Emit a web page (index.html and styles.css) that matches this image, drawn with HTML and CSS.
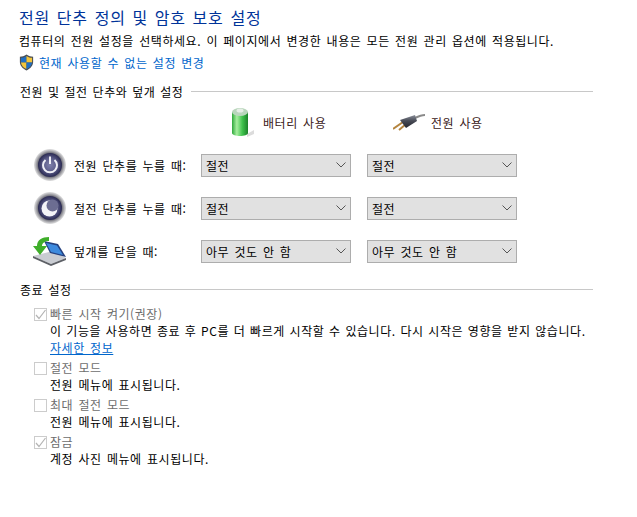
FILE: index.html
```html
<!DOCTYPE html>
<html lang="ko">
<head>
    <meta charset="UTF-8">
    <title>전원 단추 정의 및 암호 보호 설정</title>
    <link rel="stylesheet" href="styles.css">
</head>
<body>
    <svg class="svg-defs" width="0" height="0">
        <defs>
            <radialGradient id="ring">
                <stop offset=".75" stop-color="#6f6f78"/>
                <stop offset=".9" stop-color="#b8b8bc"/>
                <stop offset="1" stop-color="#e2e2e2"/>
            </radialGradient>
            <radialGradient id="disc">
                <stop offset="0" stop-color="#8081ab"/>
                <stop offset=".6" stop-color="#5a5b88"/>
                <stop offset="1" stop-color="#2a2a52"/>
            </radialGradient>
            <linearGradient id="batt" x1="0" x2="1" y1="0" y2="0">
                <stop offset="0" stop-color="#2fa83c"/>
                <stop offset=".3" stop-color="#a6ee9e"/>
                <stop offset=".65" stop-color="#3fc24c"/>
                <stop offset="1" stop-color="#1b8229"/>
            </linearGradient>
            <linearGradient id="plugbody" x1="0" x2="0" y1="0" y2="1">
                <stop offset="0" stop-color="#8b8f9a"/>
                <stop offset=".45" stop-color="#484b56"/>
                <stop offset="1" stop-color="#24262e"/>
            </linearGradient>
        </defs>
    </svg>

    <h1 class="page-title">전원 단추 정의 및 암호 보호 설정</h1>
    <p class="intro">컴퓨터의 전원 설정을 선택하세요. 이 페이지에서 변경한 내용은 모든 전원 관리 옵션에 적용됩니다.</p>
    <div class="admin-link">
        <svg class="shield" width="15" height="17" viewBox="0 0 17 19">
            <path d="M8.5 .5 C6 2.5 3.500 3 1 3 V9 C1 13 4 16.500 8.500 18.500 C13 16.500 16 13 16 9 V3 C13.500 3 11 2.500 8.500 .5Z" fill="#4a4f55"/>
            <path d="M8.500 2 C6.500 3.500 4.500 4 2.200 4.200 V9.500 H8.500Z" fill="#1f6fc4"/>
            <path d="M8.500 2 C10.500 3.500 12.500 4 14.800 4.200 V9.500 H8.500Z" fill="#f3c53a"/>
            <path d="M2.200 9.500 H8.500 V17 C5 15.300 2.600 13 2.200 9.500Z" fill="#f3c53a"/>
            <path d="M14.800 9.500 H8.500 V17 C12 15.300 14.400 13 14.800 9.500Z" fill="#1f6fc4"/>
        </svg>
        <a href="#" class="link">현재 사용할 수 없는 설정 변경</a>
    </div>

    <div class="group-head">
        <span class="group-title">전원 및 절전 단추와 덮개 설정</span>
        <div class="group-line"></div>
    </div>

    <div class="power-grid">
        <div></div>
        <div class="col-head col-battery">
            <svg width="24" height="32" viewBox="0 0 24 32">
                <path d="M16 28 L23 24 L23 28 L16 31Z" fill="#dcdcdc"/>
                <path d="M1 6 V27 C1 31 17 31 17 27 V6Z" fill="url(#batt)"/>
                <ellipse cx="9" cy="6" rx="8" ry="4" fill="#b9d6bc"/>
                <ellipse cx="9" cy="4.500" rx="3.500" ry="2" fill="#e6eee6"/>
            </svg>
            <span class="col-label">배터리 사용</span>
        </div>
        <div class="col-head col-plug">
            <svg width="32" height="18" viewBox="0 0 32 18">
                <path d="M0 16 L10 9 M6 17 L13 11" stroke="#b5853f" stroke-width="2"/>
                <path d="M22 5 C26 3 29 2 32 2" stroke="#8a8a8a" stroke-width="2" fill="none"/>
                <path d="M7 7 L22 2 L24 8 L13 15 Z" fill="url(#plugbody)"/>
            </svg>
            <span class="col-label">전원 사용</span>
        </div>

        <div class="row-label">
            <svg class="round-icon" width="32" height="32" viewBox="0 0 32 32">
                <circle cx="16" cy="16" r="16" fill="url(#ring)"/>
                <circle cx="16" cy="16" r="12" fill="url(#disc)"/>
                <path d="M11.500 11 A7 7 0 1 0 20.500 11" fill="none" stroke="#f0f0f6" stroke-width="2"/>
                <path d="M16 7.500 V15" stroke="#f0f0f6" stroke-width="2"/>
            </svg>
            <span>전원 단추를 누를 때:</span>
        </div>
        <div class="select"><span>절전</span><svg class="chev" width="10" height="6" viewBox="0 0 10 6"><path d="M.5 .5 L5 5 L9.500 .5" fill="none" stroke="#555"/></svg></div>
        <div class="select"><span>절전</span><svg class="chev" width="10" height="6" viewBox="0 0 10 6"><path d="M.5 .5 L5 5 L9.500 .5" fill="none" stroke="#555"/></svg></div>

        <div class="row-label">
            <svg class="round-icon" width="32" height="32" viewBox="0 0 32 32">
                <circle cx="16" cy="16" r="16" fill="url(#ring)"/>
                <circle cx="16" cy="16" r="12" fill="url(#disc)"/>
                <circle cx="15.500" cy="16.500" r="8" fill="#f4f4f8"/>
                <circle cx="18.500" cy="13.500" r="6" fill="#6c6d92"/>
            </svg>
            <span>절전 단추를 누를 때:</span>
        </div>
        <div class="select"><span>절전</span><svg class="chev" width="10" height="6" viewBox="0 0 10 6"><path d="M.5 .5 L5 5 L9.500 .5" fill="none" stroke="#555"/></svg></div>
        <div class="select"><span>절전</span><svg class="chev" width="10" height="6" viewBox="0 0 10 6"><path d="M.5 .5 L5 5 L9.500 .5" fill="none" stroke="#555"/></svg></div>

        <div class="row-label">
            <svg class="lid-icon" width="33" height="29" viewBox="0 0 33 29">
                <path d="M0 19 L18 27 L33 21 L20 14Z" fill="#c9ccd2"/>
                <path d="M0 19 L18 27 L33 21 V23 L18 29 L0 21Z" fill="#5d6066"/>
                <path d="M11 4 L25 7 L33 20 L17 16Z" fill="#24407f"/>
                <path d="M13 6 L24 8.500 L30 18 L18 15Z" fill="#3d8ade"/>
                <path d="M16 0 C9 0 4 3 4 9 L0 9 L7 18 L14 9 L9 9 C9 6 12 4 16 4Z" fill="#3fae2a"/>
            </svg>
            <span>덮개를 닫을 때:</span>
        </div>
        <div class="select"><span>아무 것도 안 함</span><svg class="chev" width="10" height="6" viewBox="0 0 10 6"><path d="M.5 .5 L5 5 L9.500 .5" fill="none" stroke="#555"/></svg></div>
        <div class="select"><span>아무 것도 안 함</span><svg class="chev" width="10" height="6" viewBox="0 0 10 6"><path d="M.5 .5 L5 5 L9.500 .5" fill="none" stroke="#555"/></svg></div>
    </div>

    <div class="group-head shutdown-head">
        <span>종료 설정</span>
        <div class="group-line"></div>
    </div>

    <div class="option first-option">
        <div class="check"><svg width="11" height="11" viewBox="0 0 11 11"><path d="M1 6 L4 9.500 L10.500 1" fill="none" stroke="#b4b4b4" stroke-width="1.200"/></svg></div>
        <div class="option-body">
            <div class="option-name">빠른 시작 켜기(권장)</div>
            <div class="long-line">이 기능을 사용하면 종료 후 PC를 더 빠르게 시작할 수 있습니다. 다시 시작은 영향을 받지 않습니다.</div>
            <a href="#" class="link more">자세한 정보</a>
        </div>
    </div>
    <div class="option">
        <div class="check"></div>
        <div class="option-body">
            <div class="option-name">절전 모드</div>
            <div>전원 메뉴에 표시됩니다.</div>
        </div>
    </div>
    <div class="option">
        <div class="check"></div>
        <div class="option-body">
            <div class="option-name">최대 절전 모드</div>
            <div>전원 메뉴에 표시됩니다.</div>
        </div>
    </div>
    <div class="option">
        <div class="check"><svg width="11" height="11" viewBox="0 0 11 11"><path d="M1 6 L4 9.500 L10.500 1" fill="none" stroke="#b4b4b4" stroke-width="1.200"/></svg></div>
        <div class="option-body">
            <div class="option-name">잠금</div>
            <div>계정 사진 메뉴에 표시됩니다.</div>
        </div>
    </div>
</body>
</html>
```

FILE: styles.css
```css
body {
    margin: 0;
    padding: 6px 0 0 19px;
    background-color: #fff;
    color: #000;
    font-family: "Noto Sans CJK KR", "Noto Sans", sans-serif;
    font-size: 12px;
    line-height: 17px;
    letter-spacing: 0.57px;
    word-spacing: 1.3px;
}
.svg-defs {
    display: block;
    height: 0;
}
.page-title {
    margin: 0;
    font-size: 16px;
    line-height: 22px;
    font-weight: 400;
    color: #003399;
    letter-spacing: 0.8px;
    word-spacing: 1.5px;
}
.intro {
    margin: 4px 0 0;
    white-space: nowrap;
}
.admin-link {
    display: flex;
    align-items: center;
    gap: 5px;
    margin-top: 3px;
    height: 20px;
}
.link {
    color: #0066cc;
    text-decoration: none;
}
.group-head {
    display: flex;
    align-items: center;
    gap: 8px;
    width: 574px;
    margin-top: 11px;
    padding-left: 1px;
    box-sizing: border-box;
}
.group-title {
    word-spacing: 0.9px;
}
.group-line {
    flex: 1;
    border-top: 1px solid #c8c8c8;
}
.power-grid {
    display: grid;
    grid-template-columns: 166px 150px 150px;
    grid-auto-rows: 32px;
    grid-template-rows: 34px;
    column-gap: 16px;
    row-gap: 11px;
    margin-top: 4px;
}
.col-head {
    display: flex;
    align-items: center;
    height: 36px;
}
.col-battery {
    padding-left: 30px;
    gap: 8px;
}
.col-plug {
    padding-left: 26px;
    gap: 6px;
}
.col-label {
    color: #3a2020;
}
.row-label {
    display: flex;
    align-items: center;
    gap: 8px;
    padding-left: 15px;
    white-space: nowrap;
}
.round-icon {
    flex: none;
}
.lid-icon {
    flex: none;
    margin-left: -1px;
}
.select {
    display: flex;
    align-items: center;
    justify-content: space-between;
    align-self: center;
    height: 23px;
    box-sizing: border-box;
    padding: 0 4px 0 4px;
    border: 1px solid #adadad;
    background-color: #e1e1e1;
}
.shutdown-head {
    margin-top: 14px;
}
.option {
    display: flex;
    gap: 3px;
    padding-left: 15px;
    margin-top: 3px;
}
.first-option {
    margin-top: 7px;
}
.check {
    flex: none;
    display: flex;
    align-items: center;
    justify-content: center;
    width: 13px;
    height: 13px;
    box-sizing: border-box;
    margin-top: 3px;
    border: 1px solid #cccccc;
}
.option-body {
    white-space: nowrap;
}
.option-name {
    color: #6d6d6d;
}
.long-line {
    word-spacing: 0.75px;
}
.more {
    text-decoration: underline;
    display: block;
}
```
